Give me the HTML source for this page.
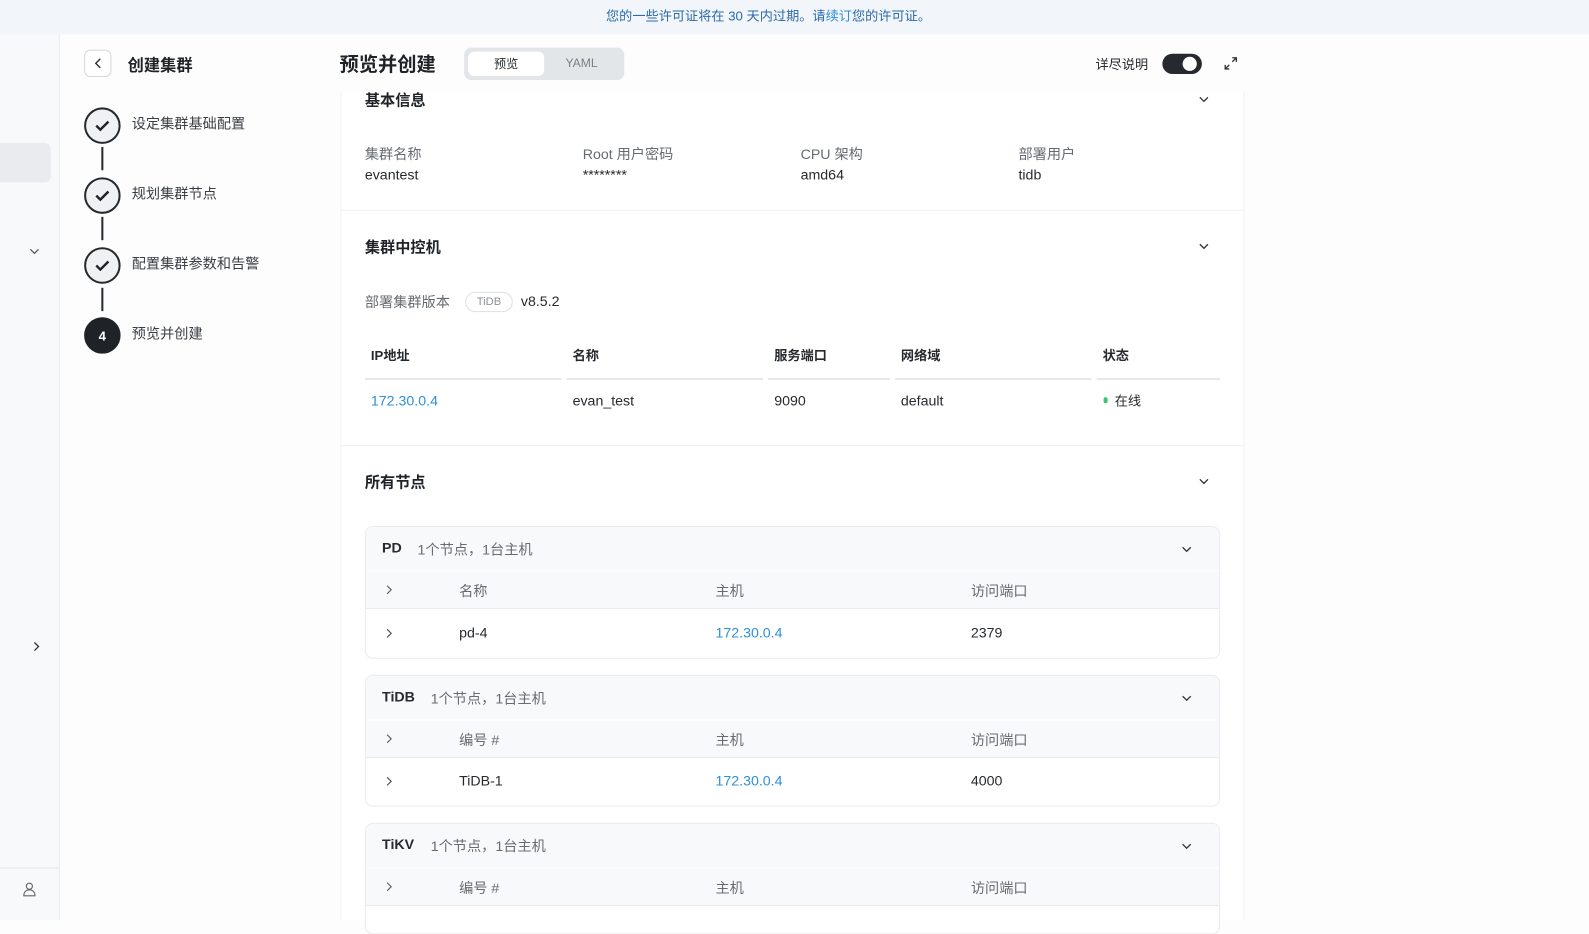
<!DOCTYPE html>
<html><head><meta charset="utf-8"><style>
*{box-sizing:border-box;margin:0;padding:0}
body{width:1589px;height:908px;overflow:hidden;background:#fdfdfe;font-family:"Liberation Sans","Noto Sans CJK SC",sans-serif;color:#262a2e;position:relative;font-size:14px}
#w{position:absolute;left:0;top:0;width:1568px;height:896px;transform:scale(1.01339);transform-origin:0 0}
.a{position:absolute;white-space:nowrap}
.banner{left:0;top:0;width:1568px;height:34px;background:#f2f6fa}
.rail{left:0;top:34px;width:59px;height:874px;background:#f8f9fa;border-right:1px solid #e9ebee}
.card{left:336px;top:90px;width:892px;height:818px;background:#fff;border-left:1px solid #f0f1f2;border-right:1px solid #f0f1f2}
.step{width:36px;height:36px;border-radius:50%;border:2px solid #262a2e;background:#f0f1f2;display:flex;align-items:center;justify-content:center}
.vl{width:2px;height:23px;background:#262a2e}
.h{font-weight:bold;font-size:15px;color:#1f2328}
.lbl{color:#666c72;font-size:14px}
.val{color:#262a2e;font-size:14px}
.link{color:#2f8fd6}
.th{font-weight:bold;font-size:13px;color:#262a2e}
.panel{left:360px;width:844px;border:1px solid #e9ebee;border-radius:8px;background:#fff;overflow:hidden}
.ph{height:43px;background:#f8f9fa;position:relative}
.ch{height:38px;background:#f8f9fa;border-top:1px solid #fff;border-bottom:1px solid #e9ebee;position:relative;color:#666c72}
.dr{height:47px;position:relative}
svg{display:block}
</style></head><body><div id="w">
<div class="a banner"></div>
<div class="a" style="left:598px;top:5px;font-size:13px;color:#2b6aa8">您的一些许可证将在 30 天内过期。请<span style="color:#2f8fd6">续订</span>您的许可证。</div>
<div class="a rail"></div>
<div class="a" style="left:0;top:141px;width:50px;height:39px;background:#e9ebee;border-radius:0 6px 6px 0"></div>
<svg class="a" style="left:28px;top:243px" width="12" height="10"><path d="M2 3l4 4 4-4" fill="none" stroke="#555" stroke-width="1.2"/></svg>
<svg class="a" style="left:31px;top:632px" width="10" height="12"><path d="M3 2l4 4-4 4" fill="none" stroke="#333" stroke-width="1.3"/></svg>
<div class="a" style="left:0;top:856px;width:59px;height:1px;background:#e3e5e8"></div>
<svg class="a" style="left:22px;top:870px" width="14" height="15"><circle cx="7" cy="4.5" r="3" fill="none" stroke="#666" stroke-width="1.1"/><path d="M1.5 14c0-4 2.5-6 5.5-6s5.5 2 5.5 6z" fill="none" stroke="#666" stroke-width="1.1"/></svg>

<div class="a" style="left:83px;top:49px;width:27px;height:27px;border:1px solid #d5d8dc;border-radius:6px;background:#fff"></div>
<svg class="a" style="left:91px;top:56px" width="12" height="13"><path d="M8 2L3.5 6.5 8 11" fill="none" stroke="#333" stroke-width="1.4"/></svg>
<div class="a h" style="left:126px;top:51px;font-size:16px">创建集群</div>

<div class="a step" style="left:83px;top:106px"><svg width="16" height="14"><path d="M2 7l4 4 8-8" fill="none" stroke="#1f2328" stroke-width="2.4"/></svg></div>
<div class="a vl" style="left:100px;top:145px"></div>
<div class="a step" style="left:83px;top:175px"><svg width="16" height="14"><path d="M2 7l4 4 8-8" fill="none" stroke="#1f2328" stroke-width="2.4"/></svg></div>
<div class="a vl" style="left:100px;top:214px"></div>
<div class="a step" style="left:83px;top:244px"><svg width="16" height="14"><path d="M2 7l4 4 8-8" fill="none" stroke="#1f2328" stroke-width="2.4"/></svg></div>
<div class="a vl" style="left:100px;top:284px"></div>
<div class="a step" style="left:83px;top:313px;background:#1f2328;border-color:#1f2328;color:#fff;font-weight:bold;font-size:13px">4</div>
<div class="a" style="left:130px;top:112px;color:#3a3f44">设定集群基础配置</div>
<div class="a" style="left:130px;top:181px;color:#3a3f44">规划集群节点</div>
<div class="a" style="left:130px;top:250px;color:#3a3f44">配置集群参数和告警</div>
<div class="a" style="left:130px;top:319px;color:#3a3f44">预览并创建</div>

<div class="a h" style="left:335px;top:49px;font-size:19px">预览并创建</div>
<div class="a" style="left:458px;top:47px;width:158px;height:32px;background:#e3e6e9;border-radius:7px"></div>
<div class="a" style="left:462px;top:51px;width:75px;height:24px;background:#fff;border-radius:6px;text-align:center;line-height:24px;font-size:12px">预览</div>
<div class="a" style="left:558px;top:55px;font-size:12px;color:#7a8087">YAML</div>
<div class="a" style="left:1081px;top:53px;font-size:13px">详尽说明</div>
<div class="a" style="left:1147px;top:53px;width:39px;height:20px;border-radius:10px;background:#262a2e"></div>
<div class="a" style="left:1167px;top:56px;width:14px;height:14px;border-radius:50%;background:#fff"></div>
<svg class="a" style="left:1207px;top:55px" width="15" height="15"><path d="M9 2h4v4M13 2L9 6M6 13H2V9M2 13l4-4" fill="none" stroke="#333" stroke-width="1.3"/></svg>

<div class="a card"></div>
<div class="a h" style="left:360px;top:88px">基本信息</div>
<svg class="a" style="left:1182px;top:93px" width="12" height="10"><path d="M2 3l4 4 4-4" fill="none" stroke="#333" stroke-width="1.3"/></svg>
<div class="a lbl" style="left:360px;top:142px">集群名称</div><div class="a val" style="left:360px;top:164px">evantest</div>
<div class="a lbl" style="left:575px;top:142px">Root 用户密码</div><div class="a val" style="left:575px;top:164px">********</div>
<div class="a lbl" style="left:790px;top:142px">CPU 架构</div><div class="a val" style="left:790px;top:164px">amd64</div>
<div class="a lbl" style="left:1005px;top:142px">部署用户</div><div class="a val" style="left:1005px;top:164px">tidb</div>
<div class="a" style="left:337px;top:207px;width:890px;height:1px;background:#eef0f2"></div>

<div class="a h" style="left:360px;top:233px">集群中控机</div>
<svg class="a" style="left:1182px;top:238px" width="12" height="10"><path d="M2 3l4 4 4-4" fill="none" stroke="#333" stroke-width="1.3"/></svg>
<div class="a lbl" style="left:360px;top:288px">部署集群版本</div>
<div class="a" style="left:459px;top:288px;width:47px;height:20px;border:1px solid #dcdfe2;border-radius:10px;text-align:center;line-height:18px;font-size:11px;color:#8a9096">TiDB</div>
<div class="a val" style="left:514px;top:289px">v8.5.2</div>
<div class="a th" style="left:366px;top:340px">IP地址</div>
<div class="a th" style="left:565px;top:340px">名称</div>
<div class="a th" style="left:764px;top:340px">服务端口</div>
<div class="a th" style="left:889px;top:340px">网络域</div>
<div class="a th" style="left:1088px;top:340px">状态</div>
<div class="a" style="left:360px;top:373px;width:194px;height:2px;background:#e6e8eb"></div>
<div class="a" style="left:559px;top:373px;width:194px;height:2px;background:#e6e8eb"></div>
<div class="a" style="left:758px;top:373px;width:120px;height:2px;background:#e6e8eb"></div>
<div class="a" style="left:883px;top:373px;width:194px;height:2px;background:#e6e8eb"></div>
<div class="a" style="left:1082px;top:373px;width:122px;height:2px;background:#e6e8eb"></div>
<div class="a link" style="left:366px;top:387px">172.30.0.4</div>
<div class="a val" style="left:565px;top:387px">evan_test</div>
<div class="a val" style="left:764px;top:387px">9090</div>
<div class="a val" style="left:889px;top:387px">default</div>
<div class="a" style="left:1089px;top:392px;width:4px;height:6px;border-radius:2px;background:#3cc46e"></div>
<div class="a val" style="left:1100px;top:385px;font-size:13px">在线</div>
<div class="a" style="left:337px;top:439px;width:890px;height:1px;background:#eef0f2"></div>

<div class="a h" style="left:360px;top:465px">所有节点</div>
<svg class="a" style="left:1182px;top:470px" width="12" height="10"><path d="M2 3l4 4 4-4" fill="none" stroke="#333" stroke-width="1.3"/></svg>

<div class="a panel" style="top:519px;height:131px">
 <div class="ph"><span class="a" style="left:16px;top:12px;font-weight:bold;font-size:14px">PD</span><span class="a" style="left:51px;top:12px;color:#666c72">1个节点，1台主机</span><svg class="a" style="left:804px;top:17px" width="12" height="10"><path d="M2 3l4 4 4-4" fill="none" stroke="#333" stroke-width="1.3"/></svg></div>
 <div class="ch"><svg class="a" style="left:18px;top:12px" width="10" height="12"><path d="M3 2l4 4-4 4" fill="none" stroke="#666" stroke-width="1.2"/></svg><span class="a" style="left:92px;top:9px">名称</span><span class="a" style="left:345px;top:9px">主机</span><span class="a" style="left:597px;top:9px">访问端口</span></div>
 <div class="dr"><svg class="a" style="left:18px;top:18px" width="10" height="12"><path d="M3 2l4 4-4 4" fill="none" stroke="#555" stroke-width="1.2"/></svg><span class="a" style="left:92px;top:15px">pd-4</span><span class="a link" style="left:345px;top:15px">172.30.0.4</span><span class="a" style="left:597px;top:15px">2379</span></div>
</div>

<div class="a panel" style="top:666px;height:130px">
 <div class="ph"><span class="a" style="left:16px;top:12px;font-weight:bold;font-size:14px">TiDB</span><span class="a" style="left:64px;top:12px;color:#666c72">1个节点，1台主机</span><svg class="a" style="left:804px;top:17px" width="12" height="10"><path d="M2 3l4 4 4-4" fill="none" stroke="#333" stroke-width="1.3"/></svg></div>
 <div class="ch"><svg class="a" style="left:18px;top:12px" width="10" height="12"><path d="M3 2l4 4-4 4" fill="none" stroke="#666" stroke-width="1.2"/></svg><span class="a" style="left:92px;top:9px">编号 #</span><span class="a" style="left:345px;top:9px">主机</span><span class="a" style="left:597px;top:9px">访问端口</span></div>
 <div class="dr"><svg class="a" style="left:18px;top:17px" width="10" height="12"><path d="M3 2l4 4-4 4" fill="none" stroke="#555" stroke-width="1.2"/></svg><span class="a" style="left:92px;top:14px">TiDB-1</span><span class="a link" style="left:345px;top:14px">172.30.0.4</span><span class="a" style="left:597px;top:14px">4000</span></div>
</div>

<div class="a panel" style="top:812px;height:110px">
 <div class="ph"><span class="a" style="left:16px;top:12px;font-weight:bold;font-size:14px">TiKV</span><span class="a" style="left:64px;top:12px;color:#666c72">1个节点，1台主机</span><svg class="a" style="left:804px;top:17px" width="12" height="10"><path d="M2 3l4 4 4-4" fill="none" stroke="#333" stroke-width="1.3"/></svg></div>
 <div class="ch"><svg class="a" style="left:18px;top:12px" width="10" height="12"><path d="M3 2l4 4-4 4" fill="none" stroke="#666" stroke-width="1.2"/></svg><span class="a" style="left:92px;top:9px">编号 #</span><span class="a" style="left:345px;top:9px">主机</span><span class="a" style="left:597px;top:9px">访问端口</span></div>
</div>
</div></body></html>
